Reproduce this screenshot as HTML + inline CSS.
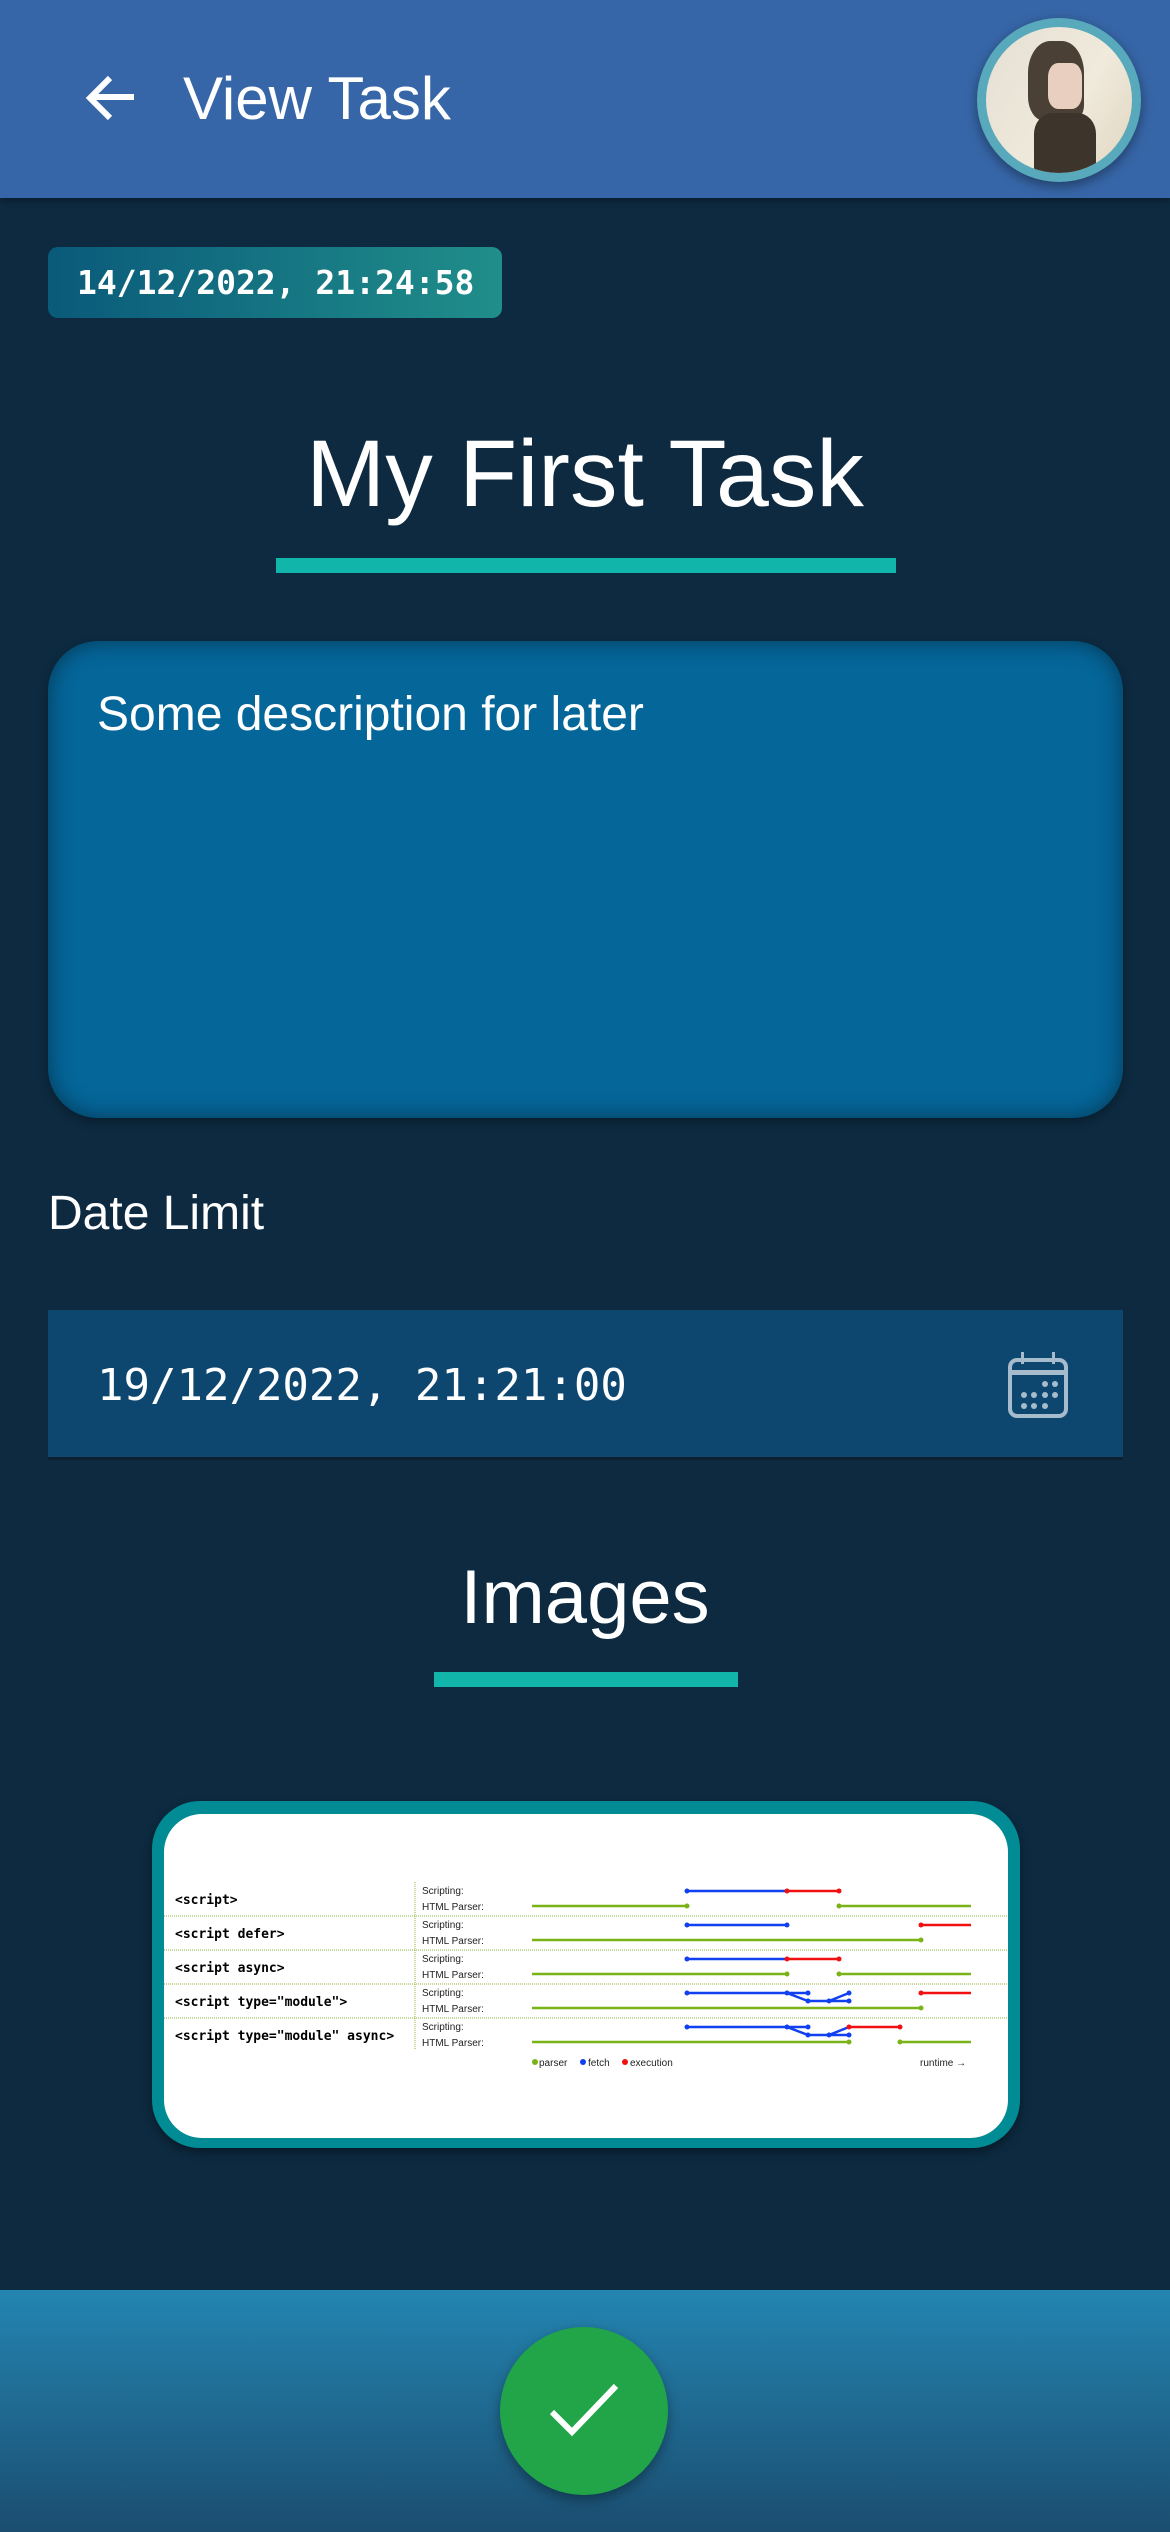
<!DOCTYPE html>
<html><head><meta charset="utf-8"><style>
*{margin:0;padding:0;box-sizing:border-box}
body{width:1170px;height:2532px;background:#0d2a40;position:relative;overflow:hidden;font-family:"Liberation Sans",sans-serif;color:#fff}
.abs{position:absolute}
.mono{font-family:"DejaVu Sans Mono","Liberation Mono",monospace}
</style></head><body>
<div class="abs" style="left:0;top:0;width:1170px;height:198px;background:#3766a8;box-shadow:0 3px 6px rgba(0,0,0,.3)"></div>
<svg class="abs" style="left:80px;top:70px" width="60" height="60" viewBox="0 0 60 60"><path d="M54 27H12M30 8L10 28L30 48" stroke="#fff" stroke-width="6" fill="none"/></svg>
<div class="abs" style="left:183px;top:64px;font-size:60px;line-height:70px">View Task</div>
<div class="abs" style="left:977px;top:18px;width:164px;height:164px;border-radius:50%;background:#58a9bb;box-shadow:0 4px 12px rgba(0,0,0,.4)"></div>
<div class="abs" style="left:986px;top:27px;width:146px;height:146px;border-radius:50%;overflow:hidden;background:linear-gradient(120deg,#e6dfd4,#f0eadc 60%,#e0d5c0)">
 <div class="abs" style="left:42px;top:14px;width:56px;height:80px;border-radius:40% 40% 20% 30%;background:#4a4036"></div>
 <div class="abs" style="left:62px;top:36px;width:34px;height:46px;border-radius:30%;background:#e8cfc0"></div>
 <div class="abs" style="left:48px;top:86px;width:62px;height:70px;border-radius:30% 30% 0 0;background:#3d342c"></div>
</div>
<div class="abs mono" style="left:48px;top:247px;width:454px;height:71px;border-radius:10px;background:linear-gradient(90deg,#0a5a7a,#208e8a);font-size:33px;font-weight:bold;line-height:71px;padding-left:29px">14/12/2022, 21:24:58</div>
<div class="abs" style="left:0;width:1170px;top:417px;text-align:center;font-size:95px;line-height:115px">My First Task</div>
<div class="abs" style="left:276px;top:558px;width:620px;height:15px;background:#12b5aa"></div>
<div class="abs" style="left:48px;top:641px;width:1075px;height:477px;border-radius:50px;background:#05669a;box-shadow:inset 0 0 24px rgba(0,0,0,.45),0 4px 10px rgba(0,0,0,.3)"></div>
<div class="abs" style="left:97px;top:686px;font-size:48px;line-height:58px">Some description for later</div>
<div class="abs" style="left:48px;top:1185px;font-size:48px;line-height:58px">Date Limit</div>
<div class="abs" style="left:48px;top:1310px;width:1075px;height:150px;background:#0d4770;border-bottom:3px solid #0d2030"></div>
<div class="abs mono" style="left:97px;top:1358px;font-size:44px;line-height:56px">19/12/2022, 21:21:00</div>
<svg class="abs" style="left:1005px;top:1350px" width="66" height="70" viewBox="0 0 66 70" fill="#a6bccd"><rect x="5" y="10" width="56" height="56" rx="7" fill="none" stroke="#a6bccd" stroke-width="4"/><rect x="5" y="20" width="56" height="5"/><rect x="16" y="2" width="3" height="12"/><rect x="47" y="2" width="3" height="12"/><circle cx="40" cy="34" r="3"/><circle cx="50" cy="34" r="3"/><circle cx="19" cy="45" r="3"/><circle cx="29" cy="45" r="3"/><circle cx="40" cy="45" r="3"/><circle cx="50" cy="45" r="3"/><circle cx="19" cy="56" r="3"/><circle cx="29" cy="56" r="3"/><circle cx="40" cy="56" r="3"/></svg>
<div class="abs" style="left:0;width:1170px;top:1553px;text-align:center;font-size:76px;line-height:90px">Images</div>
<div class="abs" style="left:434px;top:1672px;width:304px;height:15px;background:#12b5aa"></div>
<div class="abs" style="left:152px;top:1801px;width:868px;height:347px;border-radius:48px;background:#008b95;box-shadow:0 4px 10px rgba(0,0,0,.4)"></div>
<div class="abs" style="left:164px;top:1814px;width:844px;height:324px;border-radius:38px;background:#fff"></div>
<svg class="abs" style="left:164px;top:1815px" width="844" height="323" viewBox="164 1815 844 323" font-family="Liberation Sans,sans-serif">
<g stroke="#8db33a" stroke-width="1" stroke-dasharray="1 1"><line x1="164" y1="1916" x2="1008" y2="1916"/><line x1="164" y1="1950" x2="1008" y2="1950"/><line x1="164" y1="1984" x2="1008" y2="1984"/><line x1="164" y1="2018" x2="1008" y2="2018"/><line x1="415" y1="1882" x2="415" y2="2050"/></g>
<g font-family="DejaVu Sans Mono,monospace" font-weight="bold" font-size="13" fill="#000">
<text x="175" y="1904">&lt;script&gt;</text><text x="175" y="1938">&lt;script defer&gt;</text><text x="175" y="1972">&lt;script async&gt;</text><text x="175" y="2006">&lt;script type="module"&gt;</text><text x="175" y="2040">&lt;script type="module" async&gt;</text></g>
<g font-size="10" fill="#222">
<text x="422" y="1894">Scripting:</text><text x="422" y="1910">HTML Parser:</text>
<text x="422" y="1928">Scripting:</text><text x="422" y="1944">HTML Parser:</text>
<text x="422" y="1962">Scripting:</text><text x="422" y="1978">HTML Parser:</text>
<text x="422" y="1996">Scripting:</text><text x="422" y="2012">HTML Parser:</text>
<text x="422" y="2030">Scripting:</text><text x="422" y="2046">HTML Parser:</text>
<text x="539" y="2066">parser</text><text x="588" y="2066">fetch</text><text x="630" y="2066">execution</text><text x="920" y="2066">runtime →</text></g>
<g stroke-width="2.5" fill="none">
<path stroke="#7ab317" d="M532 1906H687M839 1906H971M532 1940H921M532 1974H787M839 1974H971M532 2008H921M532 2042H849M900 2042H971"/>
<path stroke="#1040f0" d="M687 1891H787M687 1925H787M687 1959H787M687 1993H808M787 1993L808 2001H849M829 2001L849 1993M687 2027H808M787 2027L808 2035H849M829 2035L849 2027"/>
<path stroke="#f01010" d="M787 1891H839M921 1925H971M787 1959H839M921 1993H971M849 2027H900"/>
</g>
<g fill="#1040f0"><circle cx="687" cy="1891" r="2.5"/><circle cx="687" cy="1925" r="2.5"/><circle cx="787" cy="1925" r="2.5"/><circle cx="687" cy="1959" r="2.5"/><circle cx="687" cy="1993" r="2.5"/><circle cx="787" cy="1993" r="2.5"/><circle cx="808" cy="1993" r="2.5"/><circle cx="849" cy="1993" r="2.5"/><circle cx="808" cy="2001" r="2.5"/><circle cx="829" cy="2001" r="2.5"/><circle cx="849" cy="2001" r="2.5"/><circle cx="687" cy="2027" r="2.5"/><circle cx="787" cy="2027" r="2.5"/><circle cx="808" cy="2027" r="2.5"/><circle cx="808" cy="2035" r="2.5"/><circle cx="829" cy="2035" r="2.5"/><circle cx="849" cy="2035" r="2.5"/><circle cx="583" cy="2062" r="3"/></g>
<g fill="#f01010"><circle cx="787" cy="1891" r="2.5"/><circle cx="839" cy="1891" r="2.5"/><circle cx="921" cy="1925" r="2.5"/><circle cx="787" cy="1959" r="2.5"/><circle cx="839" cy="1959" r="2.5"/><circle cx="921" cy="1993" r="2.5"/><circle cx="849" cy="2027" r="2.5"/><circle cx="900" cy="2027" r="2.5"/><circle cx="625" cy="2062" r="3"/></g>
<g fill="#7ab317"><circle cx="687" cy="1906" r="2.5"/><circle cx="839" cy="1906" r="2.5"/><circle cx="921" cy="1940" r="2.5"/><circle cx="787" cy="1974" r="2.5"/><circle cx="839" cy="1974" r="2.5"/><circle cx="921" cy="2008" r="2.5"/><circle cx="849" cy="2042" r="2.5"/><circle cx="900" cy="2042" r="2.5"/><circle cx="535" cy="2062" r="3"/></g>
</svg>
<div class="abs" style="left:0;top:2290px;width:1170px;height:242px;background:linear-gradient(180deg,#2385b1,#1b4d70)"></div>
<div class="abs" style="left:500px;top:2327px;width:168px;height:168px;border-radius:50%;background:#21a548;box-shadow:0 5px 12px rgba(0,0,0,.35)"></div>
<svg class="abs" style="left:548px;top:2378px" width="72" height="66" viewBox="0 0 72 66"><path d="M4 34L24 54L68 8" stroke="#fff" stroke-width="6" fill="none"/></svg>
</body></html>
